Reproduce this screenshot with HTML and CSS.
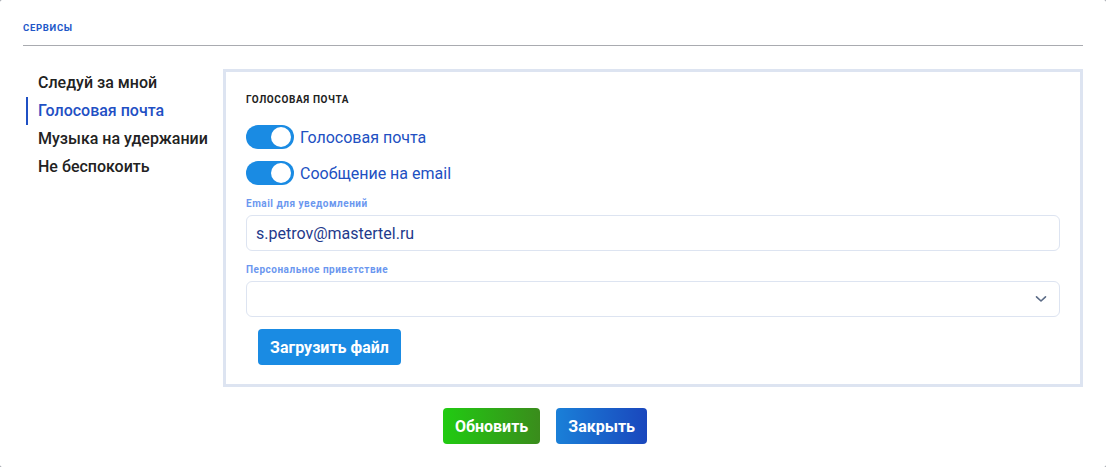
FILE: index.html
```html
<!DOCTYPE html>
<html lang="ru">
<head>
    <meta charset="UTF-8">
    <meta name="viewport" content="width=device-width, initial-scale=1.0">
    <title>Сервисы</title>
    <link rel="stylesheet" href="styles.css">
</head>
<body>
    <div class="modal">
        <div class="section-title">Сервисы</div>

        <div class="content">
            <!-- Навигация по сервисам -->
            <ul class="service-nav">
                <li>Следуй за мной</li>
                <li class="active">Голосовая почта</li>
                <li>Музыка на удержании</li>
                <li>Не беспокоить</li>
            </ul>

            <!-- Настройки голосовой почты -->
            <div class="panel">
                <div class="panel-title">Голосовая почта</div>

                <label class="toggle-row">
                    <span class="toggle on"><span class="knob"></span></span>
                    <span class="toggle-label">Голосовая почта</span>
                </label>
                <label class="toggle-row">
                    <span class="toggle on"><span class="knob"></span></span>
                    <span class="toggle-label">Сообщение на email</span>
                </label>

                <div class="field">
                    <div class="field-label">Email для уведомлений</div>
                    <div class="input">s.petrov@mastertel.ru</div>
                </div>

                <div class="field field-greeting">
                    <div class="field-label">Персональное приветствие</div>
                    <div class="input select">
                        <svg class="chevron" width="12" height="8" viewBox="0 0 12 8">
                            <path d="M1.5 1.8 L6 6 L10.5 1.8" fill="none" stroke="#5b6b86" stroke-width="1.6" stroke-linecap="round" stroke-linejoin="round"/>
                        </svg>
                    </div>
                </div>

                <button class="btn btn-upload">Загрузить файл</button>
            </div>
        </div>

        <div class="footer">
            <button class="btn btn-green">Обновить</button>
            <button class="btn btn-blue">Закрыть</button>
        </div>
    </div>
</body>
</html>
```

FILE: styles.css
```css
body {
    margin: 0;
    padding: 0;
    background-color: #8a8f99;
    font-family: Roboto, "Liberation Sans", Arial, sans-serif;
}
.modal {
    background-color: #fff;
    width: 1106px;
    height: 467px;
    box-sizing: border-box;
    padding: 22px 23px 0 23px;
    border-radius: 2px;
}
.section-title {
    font-size: 9.5px;
    font-weight: 700;
    line-height: 12px;
    letter-spacing: 0.7px;
    text-transform: uppercase;
    color: #2157c8;
    padding-bottom: 11px;
    border-bottom: 1px solid #a9abb0;
}
.content {
    display: flex;
    margin-top: 23px;
}
.service-nav {
    list-style: none;
    margin: 0 0 0 3px;
    padding: 0;
    width: 197px;
}
.service-nav li {
    font-size: 16px;
    font-weight: 500;
    line-height: 28px;
    color: #222;
    padding-left: 10px;
    border-left: 2px solid transparent;
}
.service-nav li.active {
    color: #1f50c4;
    border-left-color: #1f50c4;
}
.panel {
    flex: 1;
    border: 3px solid #dde4f1;
    padding: 20px 20px 19px 20px;
}
.panel-title {
    font-size: 10px;
    font-weight: 700;
    line-height: 16px;
    letter-spacing: 0.6px;
    text-transform: uppercase;
    color: #222;
    margin-bottom: 17px;
}
.toggle-row {
    display: flex;
    align-items: center;
    gap: 6px;
    height: 24px;
    margin-bottom: 12px;
}
.toggle {
    position: relative;
    width: 48px;
    height: 24px;
    border-radius: 12px;
    background-color: #1a8be3;
}
.toggle .knob {
    position: absolute;
    top: 2px;
    right: 3px;
    width: 20px;
    height: 20px;
    border-radius: 50%;
    background-color: #fff;
}
.toggle-label {
    font-size: 16px;
    color: #2150c2;
}
.field {
    margin-top: 11px;
}
.field-greeting {
    margin-top: 12px;
}
.field-label {
    font-size: 10px;
    font-weight: 700;
    line-height: 13px;
    letter-spacing: 0.5px;
    color: #6b97ef;
    margin-bottom: 5px;
}
.input {
    height: 36px;
    box-sizing: border-box;
    border: 1px solid #dde4f1;
    border-radius: 6px;
    padding: 0 9px;
    display: flex;
    align-items: center;
    font-size: 16px;
    color: #1f3a8c;
}
.select {
    justify-content: flex-end;
    padding-right: 12px;
}
.btn {
    border: none;
    border-radius: 4px;
    height: 36px;
    padding: 0 12px;
    font-family: Roboto, "Liberation Sans", Arial, sans-serif;
    font-size: 16px;
    font-weight: 700;
    color: #fff;
    cursor: pointer;
}
.btn-upload {
    display: block;
    margin: 12px 0 0 12px;
    padding: 0 12px;
    background-color: #1a8be3;
}
.footer {
    display: flex;
    justify-content: center;
    gap: 16px;
    margin-top: 21px;
    padding-right: 16px;
}
.btn-green {
    background: linear-gradient(90deg, #21cb12, #3a8c1c);
}
.btn-blue {
    background: linear-gradient(90deg, #1a80d8, #1a47bd);
}
```
